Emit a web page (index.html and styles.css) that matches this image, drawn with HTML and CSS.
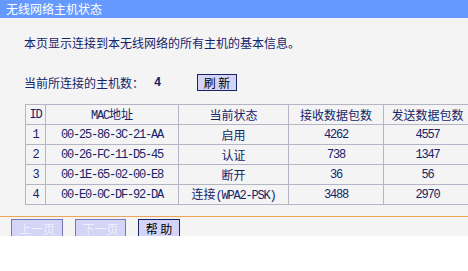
FILE: index.html
```html
<!DOCTYPE html>
<html lang="zh-CN">
<head>
    <meta charset="UTF-8">
    <title>无线网络主机状态</title>
    <link rel="stylesheet" href="styles.css">
</head>
<body>
    <div class="title-bar">无线网络主机状态</div>
    <div class="panel">
        <p class="intro">本页显示连接到本无线网络的所有主机的基本信息。</p>
        <div class="count-row">
            <span class="count-label">当前所连接的主机数：</span>
            <span class="count-num">4</span>
            <button class="btn btn-refresh">刷 新</button>
        </div>
        <table class="hosts">
            <tr>
                <th class="mono col-id">ID</th>
                <th class="col-mac"><span class="mono">MAC</span>地址</th>
                <th class="col-state">当前状态</th>
                <th class="col-rx">接收数据包数</th>
                <th class="col-tx">发送数据包数</th>
            </tr>
            <tr>
                <td class="mono">1</td>
                <td class="mono">00-25-86-3C-21-AA</td>
                <td>启用</td>
                <td class="mono">4262</td>
                <td class="mono">4557</td>
            </tr>
            <tr>
                <td class="mono">2</td>
                <td class="mono">00-26-FC-11-D5-45</td>
                <td>认证</td>
                <td class="mono">738</td>
                <td class="mono">1347</td>
            </tr>
            <tr>
                <td class="mono">3</td>
                <td class="mono">00-1E-65-02-00-E8</td>
                <td>断开</td>
                <td class="mono">36</td>
                <td class="mono">56</td>
            </tr>
            <tr>
                <td class="mono">4</td>
                <td class="mono">00-E0-0C-DF-92-DA</td>
                <td>连接<span class="mono">(WPA2-PSK)</span></td>
                <td class="mono">3488</td>
                <td class="mono">2970</td>
            </tr>
        </table>
        <div class="footer">
            <button class="btn btn-prev" disabled>上一页</button>
            <button class="btn btn-next" disabled>下一页</button>
            <button class="btn btn-help">帮 助</button>
        </div>
    </div>
</body>
</html>
```

FILE: styles.css
```css
body {
    margin: 0;
    padding: 0;
    background-color: #ffffff;
    font-family: "Noto Sans CJK SC", "Liberation Sans", sans-serif;
    font-size: 12px;
    color: #14246a;
}

.title-bar {
    height: 18px;
    line-height: 18px;
    padding-left: 6px;
    background-color: #6699ff;
    color: #ffffff;
    font-size: 12px;
}

.panel {
    height: 218px;
    overflow: hidden;
    background-color: #f4f4f4;
}

.intro {
    margin: 18px 0 0 24px;
    line-height: 14px;
}

.count-row {
    display: flex;
    align-items: center;
    height: 17px;
    margin: 24px 0 0 24px;
}

.count-label {
    width: 130px;
}

.count-num {
    width: 43px;
    font-family: "Liberation Mono", monospace;
    font-weight: bold;
}

.btn {
    height: 17px;
    padding: 0;
    border: 1px solid #1a2366;
    background-color: #d4d4f6;
    color: #000000;
    font-family: "Noto Sans CJK SC", "Liberation Sans", sans-serif;
    font-size: 12px;
    line-height: 14px;
}

.btn-refresh {
    width: 40px;
}

.hosts {
    margin: 13px 0 0 25px;
    width: 441px;
    border-collapse: collapse;
    table-layout: fixed;
}

.hosts th,
.hosts td {
    height: 19px;
    padding: 0;
    border: 1px solid #b4b4c4;
    text-align: center;
    font-weight: normal;
    line-height: 14px;
    white-space: nowrap;
}

.mono {
    font-family: "Liberation Mono", "Noto Sans CJK SC", monospace;
    letter-spacing: -1.2px;
}

.col-id { width: 19px; }
.col-mac { width: 132px; }
.col-state { width: 109px; }
.col-rx { width: 94px; }
.col-tx { width: 87px; }

.footer {
    margin-top: 11px;
    padding: 2px 0 0 11px;
    border-top: 1px solid #f0a458;
    display: flex;
    gap: 12px;
}

.footer .btn {
    height: 20px;
}

.btn-prev {
    width: 52px;
}

.btn-next {
    width: 51px;
}

.btn-help {
    width: 42px;
}

.btn:disabled {
    border-color: #7478b0;
    color: #f0f0fc;
}
```
